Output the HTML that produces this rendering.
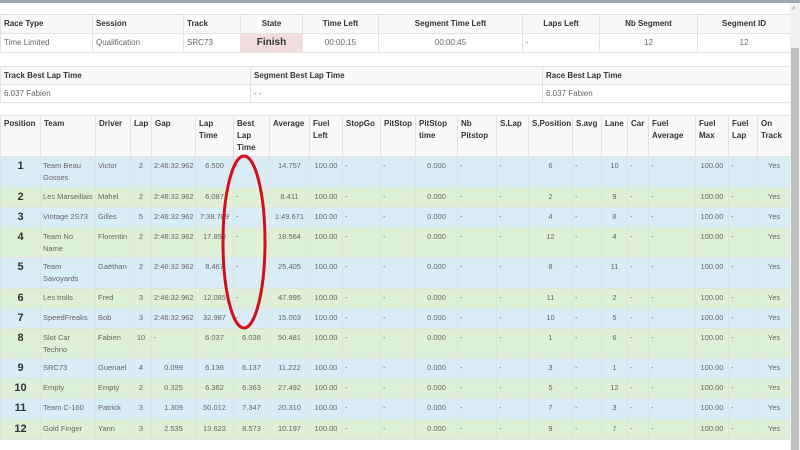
<!DOCTYPE html>
<html><head><meta charset="utf-8"><style>
*{box-sizing:border-box;margin:0;padding:0}
body{width:800px;height:450px;overflow:hidden;background:#fff;font-family:"Liberation Sans",Arial,sans-serif;color:#555;position:relative}
.topbar{position:absolute;left:0;top:0;width:800px;height:3px;background:#9aaab5}
.sb{position:absolute;left:790px;top:3px;width:10px;height:447px;background:#f1f1f1}
.sb .th{position:absolute;left:1px;top:45px;width:8px;height:402px;background:#c1c1c1}
.sb .ar{position:absolute;left:2px;top:4px;font-size:7px;color:#777}
table{position:absolute;left:0;border-collapse:collapse;table-layout:fixed;font-size:8px}
td,th{border:1px solid #e2e2e2;overflow:hidden;white-space:nowrap;vertical-align:top}
th{font-weight:bold;color:#333;text-align:left;padding:4px 3px;background:#f9f9f9}
td{padding:4px 3px;color:#666}
#t1{top:14px;width:790px}
#t1 th,#t1 td{height:19px}
#t1 .c{text-align:center}
#t1 .fin{background:#f2dede;color:#333;font-weight:bold;font-size:10px;text-align:center;padding:3px}
#t2{top:66px;width:790px}
#t2 th,#t2 td{height:18px}
#t3{top:115px;width:790px;font-size:7.5px}
#t3 th{height:40px;white-space:normal;line-height:12px;padding:2px 3px;font-size:8px}
#t3 td{white-space:normal;line-height:12px;padding:3px 2px 1px;text-align:center;overflow:visible}
#t3 td.l{text-align:left}
#t3 td.p{font-weight:bold;font-size:11px;color:#333}
tr.b td{background:#d9edf7}
tr.g td{background:#dff0d8}
svg{position:absolute;left:0;top:0}
</style></head><body>
<div class="topbar"></div>
<table id="t1"><colgroup><col style="width:92px"><col style="width:91px"><col style="width:57px"><col style="width:62px"><col style="width:76px"><col style="width:144px"><col style="width:77px"><col style="width:98px"><col style="width:93px"></colgroup>
<tr><th>Race Type</th><th>Session</th><th>Track</th><th class="c" style="text-align:center">State</th><th style="text-align:center">Time Left</th><th style="text-align:center">Segment Time Left</th><th style="text-align:center">Laps Left</th><th style="text-align:center">Nb Segment</th><th style="text-align:center">Segment ID</th></tr>
<tr><td>Time Limited</td><td>Qualification</td><td>SRC73</td><td class="fin">Finish</td><td class="c">00:00:15</td><td class="c">00:00:45</td><td>-</td><td class="c">12</td><td class="c">12</td></tr>
</table>
<table id="t2"><colgroup><col style="width:250px"><col style="width:292px"><col style="width:248px"></colgroup>
<tr><th>Track Best Lap Time</th><th>Segment Best Lap Time</th><th>Race Best Lap Time</th></tr>
<tr><td>6.037 Fabien</td><td>- -</td><td>6.037 Fabien</td></tr>
</table>
<table id="t3"><colgroup>
<col style="width:40px"><col style="width:55px"><col style="width:35px"><col style="width:21px"><col style="width:44px"><col style="width:38px"><col style="width:36px"><col style="width:40px"><col style="width:33px"><col style="width:38px"><col style="width:35px"><col style="width:42px"><col style="width:39px"><col style="width:32px"><col style="width:44px"><col style="width:29px"><col style="width:26px"><col style="width:21px"><col style="width:47px"><col style="width:33px"><col style="width:29px"><col style="width:33px"></colgroup>
<tr><th>Position</th><th>Team</th><th>Driver</th><th>Lap</th><th>Gap</th><th>Lap Time</th><th>Best Lap Time</th><th>Average</th><th>Fuel Left</th><th>StopGo</th><th>PitStop</th><th>PitStop time</th><th>Nb Pitstop</th><th>S.Lap</th><th>S.Position</th><th>S.avg</th><th>Lane</th><th>Car</th><th>Fuel Average</th><th>Fuel Max</th><th>Fuel Lap</th><th>On Track</th></tr>
<tr class="b" style="height:31px"><td class="p">1</td><td class="l">Team Beau Gosses</td><td class="l">Victor</td><td>2</td><td>2:46:32.962</td><td>6.500</td><td class="l">-</td><td>14.757</td><td>100.00</td><td class="l">-</td><td class="l">-</td><td>0.000</td><td class="l">-</td><td class="l">-</td><td>6</td><td class="l">-</td><td>10</td><td class="l">-</td><td class="l">-</td><td>100.00</td><td class="l">-</td><td>Yes</td></tr>
<tr class="g" style="height:20px"><td class="p">2</td><td class="l">Les Marseillais</td><td class="l">Mahel</td><td>2</td><td>2:46:32.962</td><td>6.087</td><td class="l">-</td><td>8.411</td><td>100.00</td><td class="l">-</td><td class="l">-</td><td>0.000</td><td class="l">-</td><td class="l">-</td><td>2</td><td class="l">-</td><td>9</td><td class="l">-</td><td class="l">-</td><td>100.00</td><td class="l">-</td><td>Yes</td></tr>
<tr class="b" style="height:20px"><td class="p">3</td><td class="l">Vintage 2S73</td><td class="l">Gilles</td><td>5</td><td>2:46:32.962</td><td>7:38.789</td><td class="l">-</td><td>1:49.671</td><td>100.00</td><td class="l">-</td><td class="l">-</td><td>0.000</td><td class="l">-</td><td class="l">-</td><td>4</td><td class="l">-</td><td>8</td><td class="l">-</td><td class="l">-</td><td>100.00</td><td class="l">-</td><td>Yes</td></tr>
<tr class="g" style="height:30px"><td class="p">4</td><td class="l">Team No Name</td><td class="l">Florentin</td><td>2</td><td>2:46:32.962</td><td>17.850</td><td class="l">-</td><td>18.564</td><td>100.00</td><td class="l">-</td><td class="l">-</td><td>0.000</td><td class="l">-</td><td class="l">-</td><td>12</td><td class="l">-</td><td>4</td><td class="l">-</td><td class="l">-</td><td>100.00</td><td class="l">-</td><td>Yes</td></tr>
<tr class="b" style="height:31px"><td class="p">5</td><td class="l">Team Savoyards</td><td class="l">Gaëthan</td><td>2</td><td>2:46:32.962</td><td>8.467</td><td class="l">-</td><td>25.405</td><td>100.00</td><td class="l">-</td><td class="l">-</td><td>0.000</td><td class="l">-</td><td class="l">-</td><td>8</td><td class="l">-</td><td>11</td><td class="l">-</td><td class="l">-</td><td>100.00</td><td class="l">-</td><td>Yes</td></tr>
<tr class="g" style="height:20px"><td class="p">6</td><td class="l">Les trolls</td><td class="l">Fred</td><td>3</td><td>2:46:32.962</td><td>12.085</td><td class="l">-</td><td>47.995</td><td>100.00</td><td class="l">-</td><td class="l">-</td><td>0.000</td><td class="l">-</td><td class="l">-</td><td>11</td><td class="l">-</td><td>2</td><td class="l">-</td><td class="l">-</td><td>100.00</td><td class="l">-</td><td>Yes</td></tr>
<tr class="b" style="height:20px"><td class="p">7</td><td class="l">SpeedFreaks</td><td class="l">Bob</td><td>3</td><td>2:46:32.962</td><td>32.987</td><td class="l">-</td><td>15.003</td><td>100.00</td><td class="l">-</td><td class="l">-</td><td>0.000</td><td class="l">-</td><td class="l">-</td><td>10</td><td class="l">-</td><td>5</td><td class="l">-</td><td class="l">-</td><td>100.00</td><td class="l">-</td><td>Yes</td></tr>
<tr class="g" style="height:30px"><td class="p">8</td><td class="l">Slot Car Techno</td><td class="l">Fabien</td><td>10</td><td class="l">-</td><td>6.037</td><td>6.038</td><td>50.481</td><td>100.00</td><td class="l">-</td><td class="l">-</td><td>0.000</td><td class="l">-</td><td class="l">-</td><td>1</td><td class="l">-</td><td>6</td><td class="l">-</td><td class="l">-</td><td>100.00</td><td class="l">-</td><td>Yes</td></tr>
<tr class="b" style="height:20px"><td class="p">9</td><td class="l">SRC73</td><td class="l">Guenael</td><td>4</td><td>0.099</td><td>6.136</td><td>6.137</td><td>11.222</td><td>100.00</td><td class="l">-</td><td class="l">-</td><td>0.000</td><td class="l">-</td><td class="l">-</td><td>3</td><td class="l">-</td><td>1</td><td class="l">-</td><td class="l">-</td><td>100.00</td><td class="l">-</td><td>Yes</td></tr>
<tr class="g" style="height:20px"><td class="p">10</td><td class="l">Empty</td><td class="l">Empty</td><td>2</td><td>0.325</td><td>6.362</td><td>6.363</td><td>27.492</td><td>100.00</td><td class="l">-</td><td class="l">-</td><td>0.000</td><td class="l">-</td><td class="l">-</td><td>5</td><td class="l">-</td><td>12</td><td class="l">-</td><td class="l">-</td><td>100.00</td><td class="l">-</td><td>Yes</td></tr>
<tr class="b" style="height:21px"><td class="p">11</td><td class="l">Team C-160</td><td class="l">Patrick</td><td>3</td><td>1.309</td><td>50.012</td><td>7.347</td><td>20.310</td><td>100.00</td><td class="l">-</td><td class="l">-</td><td>0.000</td><td class="l">-</td><td class="l">-</td><td>7</td><td class="l">-</td><td>3</td><td class="l">-</td><td class="l">-</td><td>100.00</td><td class="l">-</td><td>Yes</td></tr>
<tr class="g" style="height:20px"><td class="p">12</td><td class="l">Gold Finger</td><td class="l">Yann</td><td>3</td><td>2.535</td><td>13.623</td><td>8.573</td><td>10.197</td><td>100.00</td><td class="l">-</td><td class="l">-</td><td>0.000</td><td class="l">-</td><td class="l">-</td><td>9</td><td class="l">-</td><td>7</td><td class="l">-</td><td class="l">-</td><td>100.00</td><td class="l">-</td><td>Yes</td></tr>
</table>
<svg width="800" height="450"><ellipse cx="244" cy="242" rx="21" ry="86" fill="none" stroke="#d0101a" stroke-width="3"/></svg>
<div class="sb"><div class="ar">^</div><div class="th"></div></div>
</body></html>
